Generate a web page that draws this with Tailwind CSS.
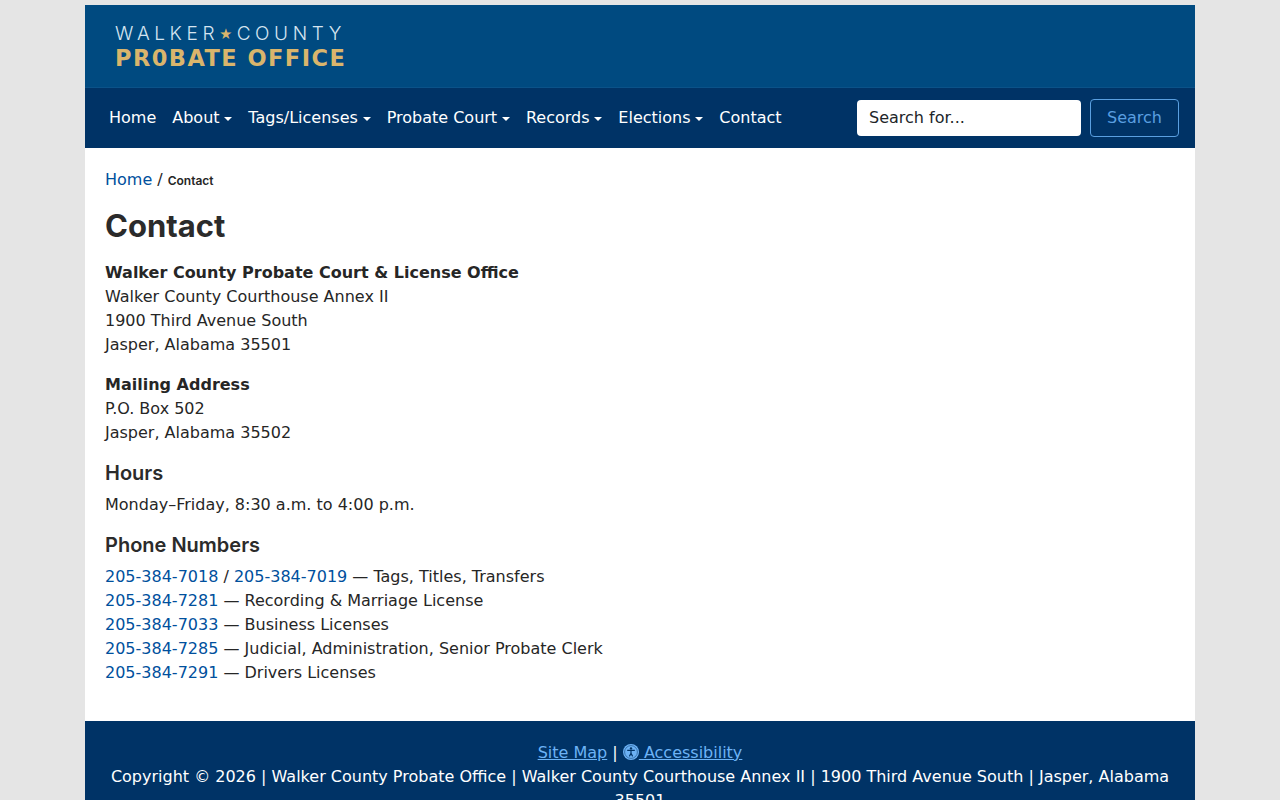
<!doctype html>
<html lang="en">
<head>
  <meta charset="UTF-8" />
  <title>Contact</title>
  <script src="https://cdn.jsdelivr.net/npm/@tailwindcss/browser@4"></script>
</head>
<body class="bg-[#e5e5e5] font-['DejaVu_Sans',sans-serif] text-[16px] leading-[24px] text-[#212529]">
  <div class="w-[1110px] mx-auto mt-[5px] bg-white">
    <header class="h-[82px] bg-[#004a80] pl-[30px] pt-[19px]">
      <div class="font-['Inter',sans-serif] font-light text-[19px] leading-[20px] tracking-[4.6px] text-[#d5e4f0] flex items-center">WALKER<span class="text-[#d9b56c] text-[13px] mr-[4px] tracking-normal">★</span>COUNTY</div>
      <div class="font-['DejaVu_Sans',sans-serif] font-bold text-[22.5px] leading-[26px] mt-[1px] tracking-[1.45px] text-[#d9b56c]">PR0BATE OFFICE</div>
    </header>
    <nav class="h-[61px] bg-[#003366] border-t border-[#0b5288] flex items-center pl-[16px] pr-[16px] text-white">
      <a class="px-[8px]">Home</a>
      <a class="px-[8px] flex items-center">About<span class="ml-[4.8px] mt-[2px] border-t-[4.8px] border-x-[4.8px] border-x-transparent border-t-white"></span></a>
      <a class="px-[8px] flex items-center">Tags/Licenses<span class="ml-[4.8px] mt-[2px] border-t-[4.8px] border-x-[4.8px] border-x-transparent border-t-white"></span></a>
      <a class="px-[8px] flex items-center">Probate Court<span class="ml-[4.8px] mt-[2px] border-t-[4.8px] border-x-[4.8px] border-x-transparent border-t-white"></span></a>
      <a class="px-[8px] flex items-center">Records<span class="ml-[4.8px] mt-[2px] border-t-[4.8px] border-x-[4.8px] border-x-transparent border-t-white"></span></a>
      <a class="px-[8px] flex items-center">Elections<span class="ml-[4.8px] mt-[2px] border-t-[4.8px] border-x-[4.8px] border-x-transparent border-t-white"></span></a>
      <a class="px-[8px]">Contact</a>
      <div class="ml-auto flex items-center gap-[9px]">
        <div class="w-[224px] h-[36px] bg-white rounded-[4px] px-[12px] flex items-center text-[#212529]">Search for...</div>
        <button class="w-[89px] h-[38px] border border-[#5a9fe0] rounded-[4px] text-[#5a9fe0]">Search</button>
      </div>
    </nav>
    <main class="px-[20px] pt-[20px] pb-[36px] text-[#262626]">
      <div class="flex items-baseline"><a class="text-[#00509d]">Home</a><span class="ml-[5px]">/</span><span class="ml-[5px] font-['Inter',sans-serif] font-semibold text-[12px]">Contact</span></div>
      <h1 class="font-['Inter',sans-serif] font-bold text-[31px] leading-[38px] mt-[14px] mb-[16px] text-[#2b2b2b]">Contact</h1>
      <p class="mb-[16px]"><b>Walker County Probate Court &amp; License Office</b><br />Walker County Courthouse Annex II<br />1900 Third Avenue South<br />Jasper, Alabama 35501</p>
      <p class="mb-[16px]"><b>Mailing Address</b><br />P.O. Box 502<br />Jasper, Alabama 35502</p>
      <h2 class="font-['Inter',sans-serif] font-semibold text-[20px] leading-[24px] mb-[8px] text-[#2b2b2b]">Hours</h2>
      <p class="mb-[16px]">Monday–Friday, 8:30 a.m. to 4:00 p.m.</p>
      <h2 class="font-['Inter',sans-serif] font-semibold text-[20px] leading-[24px] mb-[8px] text-[#2b2b2b]">Phone Numbers</h2>
      <p><a class="text-[#00509d]">205-384-7018</a> / <a class="text-[#00509d]">205-384-7019</a> — Tags, Titles, Transfers<br />
      <a class="text-[#00509d]">205-384-7281</a> — Recording &amp; Marriage License<br />
      <a class="text-[#00509d]">205-384-7033</a> — Business Licenses<br />
      <a class="text-[#00509d]">205-384-7285</a> — Judicial, Administration, Senior Probate Clerk<br />
      <a class="text-[#00509d]">205-384-7291</a> — Drivers Licenses</p>
    </main>
    <footer class="bg-[#003366] text-white text-center px-[20px] pt-[20px] pb-[20px]">
      <p><a class="underline text-[#6cb2f5]">Site Map</a> | <a class="underline text-[#6cb2f5]"><svg class="inline-block w-[16px] h-[16px] align-[-2px]" viewBox="0 0 16 16"><circle cx="8" cy="8" r="8" fill="currentColor"/><circle cx="8" cy="8" r="6.4" fill="none" stroke="#003366" stroke-width="0.5"/><circle cx="8" cy="4.4" r="1.2" fill="#003366"/><path d="M4.2 6.3 L11.8 6.3 M8 6.3 L8 9.3 M8 9.3 L6.4 12.4 M8 9.3 L9.6 12.4" stroke="#003366" stroke-width="1.2" fill="none"/></svg> Accessibility</a></p>
      <p>Copyright © 2026 | Walker County Probate Office | Walker County Courthouse Annex II | 1900 Third Avenue South | Jasper, Alabama 35501</p>
    </footer>
  </div>
</body>
</html>
